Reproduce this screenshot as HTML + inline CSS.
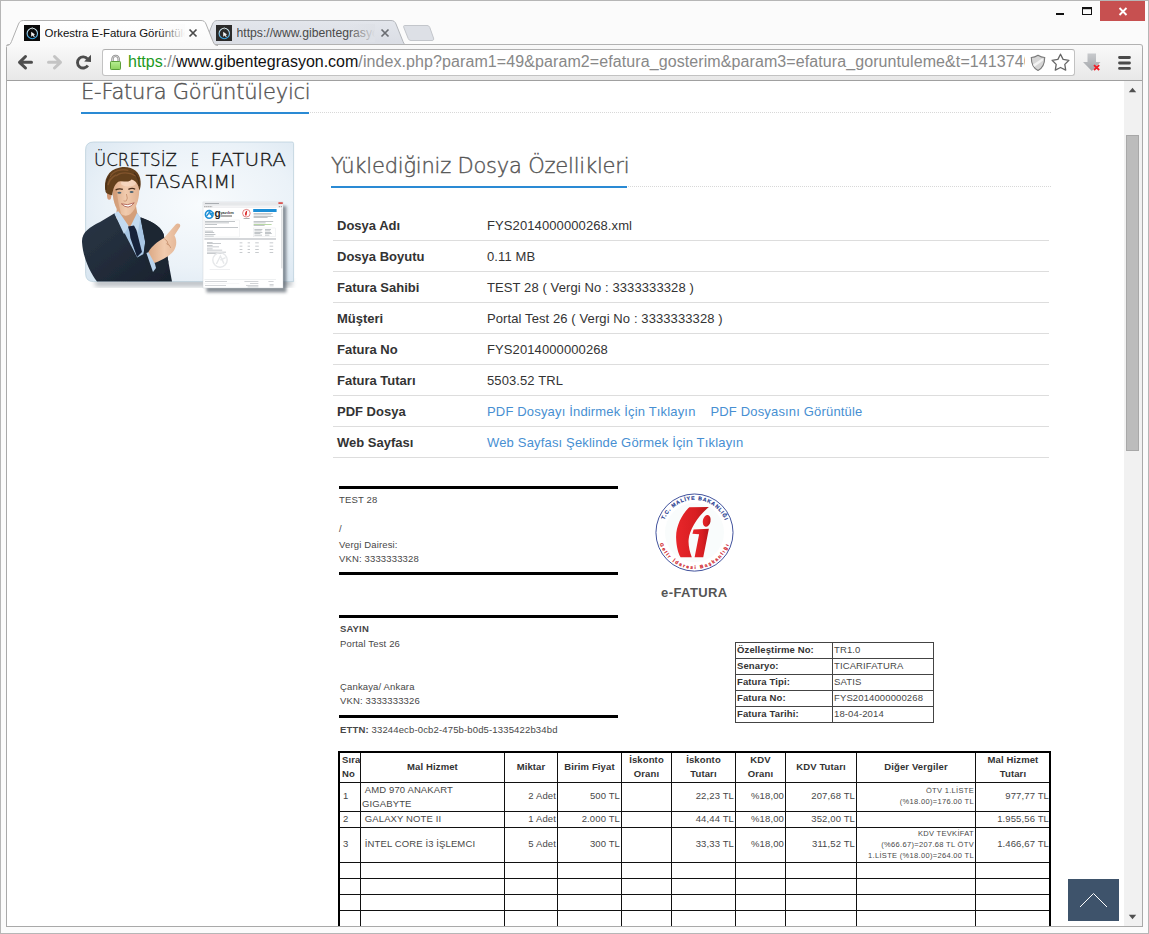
<!DOCTYPE html>
<html lang="tr">
<head>
<meta charset="utf-8">
<title>Orkestra E-Fatura Görüntüleyici</title>
<style>
*{box-sizing:border-box;margin:0;padding:0}
html,body{width:1149px;height:934px;overflow:hidden;background:#fbfbfb;font-family:"Liberation Sans",sans-serif}
.a{position:absolute}
#frame{position:absolute;left:0;top:0;width:1149px;height:934px;border:1px solid #b6b6b6;z-index:50;pointer-events:none}
/* ---------- chrome ---------- */
#toolbar{position:absolute;left:6px;top:44px;width:1137px;height:37px;background:linear-gradient(#f9f9f9,#e8e8e8);border-top:1px solid #b2b2b2;border-bottom:1px solid #a0a0a0;border-left:1px solid #b0b0b0;border-right:1px solid #b0b0b0;border-radius:3px 3px 0 0}
#urlbox{position:absolute;left:102px;top:49px;width:973px;height:27px;background:#fff;border:1px solid #c2c2c2;border-top-color:#b0b0b0;border-radius:3px}
#url{position:absolute;left:128px;top:49px;height:27px;line-height:26px;font-size:16px;white-space:nowrap;color:#888;width:897px;overflow:hidden}
#url .g{color:#1d9a1d}#url .b{color:#111}
.tabtxt{position:absolute;top:24px;font-size:11.8px;line-height:18px;white-space:nowrap;overflow:hidden;color:#111}
/* ---------- page ---------- */
#clip{position:absolute;left:7px;top:81px;width:1117px;height:845px;background:#fff;overflow:hidden}
#pg{position:absolute;left:-7px;top:-81px;width:1149px;height:934px}
#sb{position:absolute;left:1124px;top:81px;width:18px;height:845px;background:#f1f1f1}
#sbthumb{position:absolute;left:1126px;top:135px;width:13px;height:316px;background:#bcbcbc;border:1px solid #a8a8a8}
h1,h2{font-family:"DejaVu Sans Light","DejaVu Sans",sans-serif;font-weight:200;font-size:21px;line-height:28px;letter-spacing:-0.2px;color:#555;-webkit-text-stroke:0.4px #555;position:absolute;white-space:nowrap}
.proptbl{position:absolute;left:333px;top:210px;width:716px;font-size:13px;color:#333}
.proptbl .r{height:31px;border-bottom:1px solid #ddd;position:relative;line-height:31px}
.proptbl .r b{position:absolute;left:4px;top:0;color:#333}
.proptbl .r span{position:absolute;left:154px;top:0;white-space:nowrap;letter-spacing:0.1px}
.proptbl i{font-style:normal;color:#478fd2;letter-spacing:0.17px}
.inv{position:absolute;font-size:9.5px;color:#474747;white-space:nowrap;line-height:12px;letter-spacing:0.15px}
.hl{position:absolute;background:#000;height:3px;left:339px;width:279px}

.it{position:absolute;font-size:9.5px;color:#484848;white-space:nowrap;line-height:11px;letter-spacing:0.12px}
.it.r{text-align:right}
.it.c{text-align:center}
.it.h{font-weight:bold;color:#333}
.vl{position:absolute;width:1px;background:#111;top:753px;height:180px}
.hz{position:absolute;height:1px;background:#111;left:340px;width:709px}
.ib{position:absolute;background:#444}
</style>
</head>
<body>

<!-- TABS -->
<svg class="a" style="left:0;top:0" width="1149" height="47" viewBox="0 0 1149 47">
<defs><linearGradient id="ig2" x1="0" y1="0" x2="0" y2="1"><stop offset="0" stop-color="#e3e6ec"/><stop offset="1" stop-color="#dadde4"/></linearGradient></defs>
<!-- inactive tab -->
<path d="M200.500,45.500 C203.500,45.500 204.500,44 205.500,41.500 L212.500,24 C213.500,21.500 215,20.500 217.500,20.500 L391,20.500 C393.500,20.500 395,21.500 396,24 L403,41.500 C404,44 405,45.500 408,45.500 Z" fill="url(#ig2)" stroke="#b3b6bb" stroke-width="1"/>
<!-- new tab button -->
<path d="M404.500,25.500 L427,25.500 C428.500,25.500 429.300,26.300 429.800,27.500 L433.500,38 C434,39.500 433.500,40.500 432,40.500 L411,40.500 C409.500,40.500 408.700,39.700 408.200,38.500 L404,28 C403.500,26.500 403.500,25.500 404.500,25.500 Z" fill="#dde0e6" stroke="#c3c6cb" stroke-width="1"/>
</svg>
<div id="toolbar"></div>
<svg class="a" style="left:0;top:0" width="1149" height="47" viewBox="0 0 1149 47">
<defs>
<linearGradient id="tg" x1="0" y1="0" x2="0" y2="1"><stop offset="0" stop-color="#ffffff"/><stop offset="1" stop-color="#f9f9f9"/></linearGradient>
<linearGradient id="fr" x1="0" y1="0" x2="0" y2="1"><stop offset="0" stop-color="#e4f1f5"/><stop offset="1" stop-color="#2f9fe0"/></linearGradient><linearGradient id="ig" x1="0" y1="0" x2="0" y2="1"><stop offset="0" stop-color="#e3e6ec"/><stop offset="1" stop-color="#dadde4"/></linearGradient>
</defs>
<!-- active tab -->
<path d="M6.500,45.500 C9.500,45.500 10.500,44 11.500,41.500 L18.500,24 C19.500,21.500 21,20.500 23.500,20.500 L201,20.500 C203.500,20.500 205,21.500 206,24 L213,41.500 C214,44 215,45.500 218,45.500 L218,47 L6.500,47 Z" fill="url(#tg)" stroke="none"/>
<path d="M6.500,45.500 C9.500,45.500 10.500,44 11.500,41.500 L18.500,24 C19.500,21.500 21,20.500 23.500,20.500 L201,20.500 C203.500,20.500 205,21.500 206,24 L213,41.500 C214,44 215,45.500 218,45.500" fill="none" stroke="#b0b0b0" stroke-width="1"/>
<!-- favicons -->
<g id="fav1" transform="translate(24,25)"><rect width="16" height="16" fill="#0b0b0b"/><circle cx="8.300" cy="8.500" r="5.200" fill="none" stroke="url(#fr)" stroke-width="1.100"/><path d="M8.300,2 v2.500" stroke="#7d8a8d" stroke-width="1.200"/><path d="M7.200,6.800 L7.200,11.800 L8.700,10.600 L10,12.300 L10.800,11.600 L9.600,10 L11,9.500 Z" fill="#f5f5f5"/></g>
<g transform="translate(216,25)"><rect width="16" height="16" fill="#2b2b2b"/><circle cx="8.300" cy="8.500" r="5.200" fill="none" stroke="url(#fr)" stroke-width="1.100"/><path d="M8.300,2 v2.500" stroke="#7d8a8d" stroke-width="1.200"/><path d="M7.200,6.800 L7.200,11.800 L8.700,10.600 L10,12.300 L10.800,11.600 L9.600,10 L11,9.500 Z" fill="#f5f5f5"/></g>
<!-- tab close x -->
<path d="M189.500,29.500 l7,7 m0,-7 l-7,7" stroke="#4a4a4a" stroke-width="1.700" fill="none"/>
<path d="M381.500,29.500 l7,7 m0,-7 l-7,7" stroke="#6a6d72" stroke-width="1.700" fill="none"/>
<!-- window controls -->
<rect x="1100" y="1" width="45" height="20" fill="#c75050"/>
<path d="M1119.500,8 l7,7 m0,-7 l-7,7" stroke="#fff" stroke-width="1.900" fill="none"/>
<rect x="1082.500" y="8" width="9" height="6.500" fill="none" stroke="#111" stroke-width="1"/><rect x="1082" y="7" width="10" height="2.200" fill="#111"/>
<rect x="1056" y="13" width="8" height="2" fill="#111"/>
</svg>
<div class="tabtxt" style="left:44.5px;width:140px;font-size:11.45px">Orkestra E-Fatura Görüntüleyici</div>
<div class="a" style="left:158px;top:24px;width:27px;height:18px;background:linear-gradient(90deg,rgba(251,251,251,0),#fbfbfb)"></div>
<div class="tabtxt" style="left:236.5px;width:138px;color:#4a4a4a;font-size:12.2px">https://www.gibentegrasyon.com</div>
<div class="a" style="left:348px;top:24px;width:27px;height:18px;background:linear-gradient(90deg,rgba(222,225,231,0),#dee1e7)"></div>

<!-- TOOLBAR -->
<div id="urlbox"></div>
<div id="url"><span class="g">https</span>://<span class="b">www.gibentegrasyon.com</span><span style="letter-spacing:0.09px">/index.php?param1=49&amp;param2=efatura_gosterim&amp;param3=efatura_goruntuleme&amp;t=14137400</span></div>

<svg class="a" style="left:0;top:46px" width="1149" height="34" viewBox="0 46 1149 34">
<!-- back -->
<path d="M31.500,62.300 H20.500 M25.500,56.500 L19.500,62.300 L25.500,68" fill="none" stroke="#4d4d4d" stroke-width="3" stroke-linecap="round" stroke-linejoin="round"/>
<!-- forward -->
<path d="M48.500,62.300 H59.500 M54.500,56.500 L60.500,62.300 L54.500,68" fill="none" stroke="#c4c4c4" stroke-width="3" stroke-linecap="round" stroke-linejoin="round"/>
<!-- reload -->
<path d="M87.800,65.500 A5.600,5.600 0 1 1 87.500,59" fill="none" stroke="#4d4d4d" stroke-width="2.900"/>
<path d="M91,54.800 V62 L84.200,61.400 Z" fill="#4d4d4d"/>
<!-- lock -->
<defs><linearGradient id="lk" x1="0" y1="0" x2="0" y2="1"><stop offset="0" stop-color="#b6ee92"/><stop offset="1" stop-color="#8ed25e"/></linearGradient></defs><path d="M112.500,61.500 V59 A3.100,3.100 0 0 1 118.700,59 V61.500" fill="none" stroke="#8c8c8c" stroke-width="2.400"/><path d="M112.500,61.500 V59 A3.100,3.100 0 0 1 118.700,59 V61.500" fill="none" stroke="#e6e6e6" stroke-width="0.800"/>
<rect x="110.500" y="61.500" width="10" height="8" rx="0.800" fill="url(#lk)" stroke="#5a9e3a" stroke-width="1"/>
<!-- shield -->
<path d="M1038,55.300 C1035.500,57 1033.500,57.500 1031.300,57.500 C1031.300,63.500 1033,68 1038,70.500 C1043,68 1044.700,63.500 1044.700,57.500 C1042.500,57.500 1040.500,57 1038,55.300 Z" fill="#d6d6d6" stroke="#7a7a7a" stroke-width="1.100"/>
<path d="M1033,64.500 L1042.500,58.300 L1043.200,60.500 L1034.200,67 Z" fill="#f3f3f3"/>
<!-- star -->
<path d="M1060.5,54.2 L1063.1,59.4 L1068.9,60.3 L1064.8,64.4 L1065.7,70.1 L1060.5,67.5 L1055.3,70.1 L1056.2,64.4 L1052.1,60.3 L1057.9,59.4 Z" fill="#fff" stroke="#666" stroke-width="1.300" stroke-linejoin="round"/>
<!-- download -->
<defs><linearGradient id="dg" x1="0" y1="0" x2="0" y2="1"><stop offset="0" stop-color="#c8cacd"/><stop offset="1" stop-color="#a3a6aa"/></linearGradient></defs>
<path d="M1087.500,53.500 H1096 V62 H1100.500 L1091.800,71 L1083,62 H1087.500 Z" fill="url(#dg)"/>
<path d="M1094,65.200 l5.200,4.800 m0,-4.800 l-5.200,4.800" stroke="#ee1c25" stroke-width="1.800" fill="none"/>
<!-- menu -->
<path d="M1119.500,57.500 H1129.500 M1119.500,63 H1129.500 M1119.500,68.400 H1129.500" stroke="#4a4a4a" stroke-width="2.800" stroke-linecap="round"/>
</svg>
<!-- PAGE -->
<div id="clip"><div id="pg">

<h1 style="left:81px;top:78px;">E-Fatura Görüntüleyici</h1>
<div class="a" style="left:81px;top:112px;width:970px;height:0;border-top:1px dotted #d8d8d8"></div>
<div class="a" style="left:81px;top:112px;width:228px;height:2px;background:#2a8ad4"></div>
<h2 style="left:331px;top:152px;">Yüklediğiniz Dosya Özellikleri</h2>
<div class="a" style="left:331px;top:186px;width:720px;height:0;border-top:1px dotted #d8d8d8"></div>
<div class="a" style="left:331px;top:186px;width:296px;height:2px;background:#2a8ad4"></div>
<div class="proptbl">
<div class="r"><b>Dosya Adı</b><span>FYS2014000000268.xml</span></div>
<div class="r"><b>Dosya Boyutu</b><span>0.11 MB</span></div>
<div class="r"><b>Fatura Sahibi</b><span>TEST 28 ( Vergi No : 3333333328 )</span></div>
<div class="r"><b>Müşteri</b><span>Portal Test 26 ( Vergi No : 3333333328 )</span></div>
<div class="r"><b>Fatura No</b><span>FYS2014000000268</span></div>
<div class="r"><b>Fatura Tutarı</b><span>5503.52 TRL</span></div>
<div class="r"><b>PDF Dosya</b><span><i>PDF Dosyayı İndirmek İçin Tıklayın</i> &nbsp;&nbsp; <i>PDF Dosyasını Görüntüle</i></span></div>
<div class="r"><b>Web Sayfası</b><span><i>Web Sayfası Şeklinde Görmek İçin Tıklayın</i></span></div>
</div>

<div class="hl" style="top:486px"></div>
<div class="inv" style="left:339px;top:494px">TEST 28</div>
<div class="inv" style="left:339px;top:523px">/</div>
<div class="inv" style="left:339px;top:539px">Vergi Dairesi:</div>
<div class="inv" style="left:339px;top:553px">VKN: 3333333328</div>
<div class="hl" style="top:572px"></div>
<div class="hl" style="top:615px"></div>
<div class="inv" style="left:340px;top:623px"><b>SAYIN</b></div>
<div class="inv" style="left:340px;top:638px">Portal Test 26</div>
<div class="inv" style="left:340px;top:681px">Çankaya/ Ankara</div>
<div class="inv" style="left:340px;top:695px">VKN: 3333333326</div>
<div class="hl" style="top:715px"></div>
<div class="inv" style="left:340px;top:724px"><b>ETTN:</b> 33244ecb-0cb2-475b-b0d5-1335422b34bd</div>

<svg class="a" style="left:645px;top:485px" width="100" height="100" viewBox="0 0 778 778">
<defs>
<path id="arcT" d="M150.300,270.400 A255,255 0 0 1 623,278.600"/>
<path id="arcB" d="M115.900,457.400 A283,283 0 0 0 655.600,452.700"/>
<linearGradient id="rg" x1="0" y1="0" x2="1" y2="0"><stop offset="0" stop-color="#e8262a"/><stop offset="0.6" stop-color="#d81e22"/><stop offset="1" stop-color="#b8161a"/></linearGradient>
</defs>
<circle cx="385" cy="370" r="300" fill="#fff" stroke="#2c3f92" stroke-width="7"/>
<circle cx="385" cy="370" r="230" fill="#f5fafa" opacity="0.6"/>
<text font-family="'Liberation Sans',sans-serif" font-weight="bold" font-size="40" fill="#2c3f92" stroke="#2c3f92" stroke-width="1.500" textLength="600" lengthAdjust="spacing"><textPath href="#arcT" textLength="600" lengthAdjust="spacing">T.C. MALİYE BAKANLIĞI</textPath></text>
<text font-family="'Liberation Sans',sans-serif" font-weight="bold" font-size="37" fill="#d0222a" stroke="#d0222a" stroke-width="1.500" textLength="700" lengthAdjust="spacing"><textPath href="#arcB" textLength="700" lengthAdjust="spacing">Gelir İdaresi Başkanlığı</textPath></text>
<!-- G crescent -->
<path d="M497,171 L345,173 C285,230 240,320 242,410 C244,480 258,530 277,563 L364,563 C345,510 335,460 340,420 C345,360 400,250 497,171 Z" fill="url(#rg)"/>
<!-- i -->
<ellipse cx="480" cy="279" rx="30" ry="46" transform="rotate(12 480 279)" fill="url(#rg)"/>
<path d="M378,347 L497,341 L453,563 L386,563 L421,384 L369,380 Z" fill="url(#rg)"/>
</svg>

<div class="a" style="left:661px;top:585px;font-size:13px;font-weight:bold;color:#555;letter-spacing:0.42px;line-height:16px;white-space:nowrap">e-FATURA</div>

<div class="ib" style="left:735px;top:642px;width:199px;height:1px"></div>
<div class="ib" style="left:735px;top:658px;width:199px;height:1px"></div>
<div class="ib" style="left:735px;top:674px;width:199px;height:1px"></div>
<div class="ib" style="left:735px;top:690px;width:199px;height:1px"></div>
<div class="ib" style="left:735px;top:706px;width:199px;height:1px"></div>
<div class="ib" style="left:735px;top:722px;width:199px;height:1px"></div>
<div class="ib" style="left:735px;top:642px;width:1px;height:81px"></div>
<div class="ib" style="left:832px;top:642px;width:1px;height:81px"></div>
<div class="ib" style="left:933px;top:642px;width:1px;height:81px"></div>
<div class="it h" style="left:737px;top:644px">Özelleştirme No:</div>
<div class="it h" style="left:737px;top:660px">Senaryo:</div>
<div class="it h" style="left:737px;top:676px">Fatura Tipi:</div>
<div class="it h" style="left:737px;top:692px">Fatura No:</div>
<div class="it h" style="left:737px;top:708px">Fatura Tarihi:</div>
<div class="it" style="left:834px;top:644px">TR1.0</div>
<div class="it" style="left:834px;top:660px">TICARIFATURA</div>
<div class="it" style="left:834px;top:676px">SATIS</div>
<div class="it" style="left:834px;top:692px">FYS2014000000268</div>
<div class="it" style="left:834px;top:708px">18-04-2014</div>

<div class="a" style="left:338px;top:751px;width:713px;height:2px;background:#000"></div>
<div class="a" style="left:338px;top:751px;width:2px;height:182px;background:#000"></div>
<div class="a" style="left:1049px;top:751px;width:2px;height:182px;background:#000"></div>
<div class="vl" style="left:360px"></div>
<div class="vl" style="left:504px"></div>
<div class="vl" style="left:557px"></div>
<div class="vl" style="left:621px"></div>
<div class="vl" style="left:671px"></div>
<div class="vl" style="left:735px"></div>
<div class="vl" style="left:785px"></div>
<div class="vl" style="left:856px"></div>
<div class="vl" style="left:975px"></div>
<div class="hz" style="top:782px"></div>
<div class="hz" style="top:811px"></div>
<div class="hz" style="top:827px"></div>
<div class="hz" style="top:862px"></div>
<div class="hz" style="top:878px"></div>
<div class="hz" style="top:894px"></div>
<div class="hz" style="top:910px"></div>
<div class="hz" style="top:926px"></div>
<div class="it h" style="left:340px;top:753px;line-height:13.5px;width:20px;padding-left:2px">Sıra<br>No</div>
<div class="it h c" style="left:361px;top:761px;width:143px">Mal Hizmet</div>
<div class="it h c" style="left:505px;top:761px;width:52px">Miktar</div>
<div class="it h c" style="left:558px;top:761px;width:63px">Birim Fiyat</div>
<div class="it h c" style="left:622px;top:753px;line-height:13.5px;width:49px">İskonto<br>Oranı</div>
<div class="it h c" style="left:672px;top:753px;line-height:13.5px;width:63px">İskonto<br>Tutarı</div>
<div class="it h c" style="left:736px;top:753px;line-height:13.5px;width:49px">KDV<br>Oranı</div>
<div class="it h c" style="left:786px;top:761px;width:70px">KDV Tutarı</div>
<div class="it h c" style="left:857px;top:761px;width:118px">Diğer Vergiler</div>
<div class="it h c" style="left:976px;top:753px;line-height:13.5px;width:74px">Mal Hizmet<br>Tutarı</div>
<div class="it " style="left:340px;top:790px;width:20px;padding-left:3px">1</div>
<div class="it" style="left:361px;top:783px;padding-left:1px;line-height:13.5px">&nbsp;AMD 970 ANAKART<br>GIGABYTE</div>
<div class="it r" style="left:505px;top:790px;width:52px;padding-right:1px">2 Adet</div>
<div class="it r" style="left:558px;top:790px;width:63px;padding-right:1px">500 TL</div>
<div class="it r" style="left:672px;top:790px;width:63px;padding-right:1px">22,23 TL</div>
<div class="it r" style="left:736px;top:790px;width:49px;padding-right:1px">%18,00</div>
<div class="it r" style="left:786px;top:790px;width:70px;padding-right:1px">207,68 TL</div>
<div class="it r" style="left:857px;top:785.0px;width:118px;padding-right:1px;font-size:7.5px;line-height:11px;letter-spacing:0.32px">ÖTV 1.LİSTE<br>(%18.00)=176.00 TL</div>
<div class="it r" style="left:976px;top:790px;width:74px;padding-right:1px">977,77 TL</div>
<div class="it " style="left:340px;top:813px;width:20px;padding-left:3px">2</div>
<div class="it " style="left:361px;top:813px;width:143px;padding-left:1px">&nbsp;GALAXY NOTE II</div>
<div class="it r" style="left:505px;top:813px;width:52px;padding-right:1px">1 Adet</div>
<div class="it r" style="left:558px;top:813px;width:63px;padding-right:1px">2.000 TL</div>
<div class="it r" style="left:672px;top:813px;width:63px;padding-right:1px">44,44 TL</div>
<div class="it r" style="left:736px;top:813px;width:49px;padding-right:1px">%18,00</div>
<div class="it r" style="left:786px;top:813px;width:70px;padding-right:1px">352,00 TL</div>
<div class="it r" style="left:976px;top:813px;width:74px;padding-right:1px">1.955,56 TL</div>
<div class="it " style="left:340px;top:838px;width:20px;padding-left:3px">3</div>
<div class="it " style="left:361px;top:838px;width:143px;padding-left:1px">&nbsp;İNTEL CORE İ3 İŞLEMCI</div>
<div class="it r" style="left:505px;top:838px;width:52px;padding-right:1px">5 Adet</div>
<div class="it r" style="left:558px;top:838px;width:63px;padding-right:1px">300 TL</div>
<div class="it r" style="left:672px;top:838px;width:63px;padding-right:1px">33,33 TL</div>
<div class="it r" style="left:736px;top:838px;width:49px;padding-right:1px">%18,00</div>
<div class="it r" style="left:786px;top:838px;width:70px;padding-right:1px">311,52 TL</div>
<div class="it r" style="left:857px;top:827.5px;width:118px;padding-right:1px;font-size:7.5px;line-height:11px;letter-spacing:0.32px">KDV TEVKİFAT<br>(%66.67)=207.68 TL ÖTV<br>1.LİSTE (%18.00)=264.00 TL</div>
<div class="it r" style="left:976px;top:838px;width:74px;padding-right:1px">1.466,67 TL</div>



<div class="a" style="left:1068px;top:879px;width:51px;height:42px;background:#3e536b"></div>
<svg class="a" style="left:1068px;top:879px" width="51" height="42" viewBox="0 0 51 42"><path d="M12,28 L25.500,14.500 L39,28" fill="none" stroke="#fff" stroke-width="1"/></svg>

<svg class="a" style="left:76px;top:134px" width="230" height="170" viewBox="0 0 1150 850">
<defs>
<radialGradient id="bbg" cx="0.55" cy="0.45" r="0.75"><stop offset="0" stop-color="#f8fbfd"/><stop offset="0.6" stop-color="#ebf2f8"/><stop offset="1" stop-color="#d9e6f1"/></radialGradient>
<linearGradient id="skin" x1="0" y1="0" x2="1" y2="0"><stop offset="0" stop-color="#dca985"/><stop offset="0.5" stop-color="#f1cbae"/><stop offset="1" stop-color="#e2b392"/></linearGradient>
<linearGradient id="suit" x1="0" y1="0" x2="1" y2="1"><stop offset="0" stop-color="#2b3747"/><stop offset="1" stop-color="#18212d"/></linearGradient>
<filter id="bl" x="-20%" y="-20%" width="140%" height="140%"><feGaussianBlur stdDeviation="14"/></filter>
<filter id="bl2" x="-20%" y="-20%" width="140%" height="140%"><feGaussianBlur stdDeviation="9"/></filter>
<filter id="soft" x="-5%" y="-5%" width="110%" height="110%"><feGaussianBlur stdDeviation="2.2"/></filter>
</defs>
<!-- card shadow -->
<path d="M95,730 H1080 V762 H95 Z" fill="#6f7a84" opacity="0.5" filter="url(#bl)"/>
<!-- card -->
<path d="M88,40 H1080 Q1088,40 1088,48 V738 H88 Q48,738 48,698 V80 Q48,40 88,40 Z" fill="url(#bbg)" stroke="#b4cbd9" stroke-width="3.500"/>
<!-- headline -->
<text y="162" font-family="'DejaVu Sans Light','DejaVu Sans',sans-serif" font-weight="200" font-size="92" fill="#111" lengthAdjust="spacingAndGlyphs" stroke="#111" stroke-width="1.500"><tspan x="90" textLength="415" lengthAdjust="spacingAndGlyphs">ÜCRETSİZ</tspan> <tspan x="574" textLength="42" lengthAdjust="spacingAndGlyphs">E</tspan> <tspan x="672" textLength="378" lengthAdjust="spacingAndGlyphs">FATURA</tspan></text>
<text x="347" y="270" font-family="'DejaVu Sans Light','DejaVu Sans',sans-serif" font-weight="200" font-size="92" fill="#111" lengthAdjust="spacingAndGlyphs" stroke="#111" stroke-width="1.500" textLength="452">TASARIMI</text>
<!-- man -->
<g filter="url(#soft)">
<!-- suit -->
<path d="M30,540 C28,490 70,465 120,440 L195,395 L300,600 L320,415 C370,435 420,455 438,500 L462,640 L480,738 L105,738 C70,690 35,620 30,540 Z" fill="url(#suit)"/>
<!-- shirt V -->
<path d="M192,398 L250,378 L300,385 L322,418 L346,540 L338,600 L306,618 Z" fill="#a8c6e4"/>
<path d="M322,418 L346,540 L338,600 L360,690 L440,700 L462,640 L438,500 C420,455 370,435 322,418 Z" fill="#1d2733"/>
<!-- neck -->
<path d="M205,360 L300,360 L312,430 L262,470 L200,420 Z" fill="#d49f7a"/>
<!-- collar -->
<path d="M192,398 L212,385 L265,462 L240,500 Z" fill="#c3daf0"/>
<path d="M322,418 L305,395 L272,462 L310,490 Z" fill="#c3daf0"/>
<!-- tie -->
<path d="M260,462 L290,458 L302,480 L330,590 L305,615 L272,520 L268,490 Z" fill="#18223a"/>
<!-- face -->
<path d="M182,285 C178,240 205,213 250,213 C295,213 319,245 316,290 C314,332 300,376 272,400 C256,411 240,411 226,400 C200,380 186,340 182,285 Z" fill="url(#skin)"/>
<path d="M182,285 C186,340 200,380 226,400 C215,360 205,320 205,270 Z" fill="#c98f6a" opacity="0.55"/>
<ellipse cx="262" cy="245" rx="38" ry="18" fill="#f8dcc6" opacity="0.7"/>
<!-- ear -->
<ellipse cx="166" cy="306" rx="11" ry="23" fill="#d39a78"/>
<!-- hair -->
<path d="M148,290 C136,230 158,178 220,167 C277,158 320,185 323,236 C325,258 321,272 317,284 C313,256 302,234 277,228 C262,250 225,226 207,242 C190,256 184,282 181,306 C166,303 152,300 148,290 Z" fill="#63401f"/>
<path d="M170,215 C185,185 225,172 262,182 M200,210 C225,188 265,190 300,210 M160,255 C165,235 180,215 200,205" stroke="#8a5a30" stroke-width="7" fill="none" opacity="0.8"/>
<path d="M150,280 C148,250 155,225 170,205 M290,195 C308,210 316,235 316,260" stroke="#3d2612" stroke-width="6" fill="none" opacity="0.7"/>
<!-- eyes / brows / mouth -->
<path d="M198,280 q18,-10 36,-3" stroke="#4a2e1c" stroke-width="6" fill="none"/><path d="M262,277 q18,-9 34,-1" stroke="#4a2e1c" stroke-width="6" fill="none"/>
<ellipse cx="217" cy="294" rx="10" ry="5" fill="#4b6270"/><ellipse cx="278" cy="290" rx="10" ry="5" fill="#4b6270"/>
<path d="M227,349 Q258,360 291,344 Q262,384 227,349 Z" fill="#fff" stroke="#a8574a" stroke-width="4"/>
<path d="M252,300 q9,24 0,34 q-8,4 -14,0" stroke="#c48e6c" stroke-width="4" fill="none"/>
<!-- cuff -->
<path d="M352,595 L378,585 L400,670 L385,690 Z" fill="#b9d3ec"/>
<!-- hand -->
<path d="M362,590 C380,560 405,540 440,520 L498,452 C508,442 526,448 520,464 L492,508 C505,530 505,560 488,585 C465,615 420,635 392,645 Z" fill="url(#skin)"/>
<path d="M440,522 q20,10 22,34 M452,548 q18,4 22,22" stroke="#c48e6c" stroke-width="4" fill="none"/>
</g>
<!-- document -->
<rect x="652" y="360" width="400" height="432" fill="#4c5660" opacity="0.65" filter="url(#bl2)"/>
<rect x="635" y="340" width="400" height="430" fill="#fff" stroke="#c9ced3" stroke-width="2"/>
<rect x="636" y="341" width="398" height="18" fill="#e6e8ea"/>
<rect x="636" y="359" width="398" height="10" fill="#f1f2f3"/>
<rect x="1012" y="341" width="22" height="9" fill="#d9534f"/><g fill="#777"><rect x="642" y="361" width="5" height="5"/><rect x="652" y="361" width="5" height="5"/><rect x="662" y="361" width="5" height="5"/><rect x="672" y="361" width="5" height="5"/><rect x="1014" y="361" width="5" height="5"/><rect x="1024" y="361" width="5" height="5"/></g><rect x="684" y="361" width="320" height="6" fill="#fff" stroke="#d0d3d6" stroke-width="1"/><rect x="645" y="345" width="70" height="4" fill="#9a9ea3"/>
<rect x="1026" y="372" width="6" height="300" fill="#d8dadd"/>
<circle cx="666" cy="402" r="19" fill="#fff" stroke="#1d8fd6" stroke-width="8"/><path d="M652,412 L668,390 L682,414 M668,402 L690,394" stroke="#1d8fd6" stroke-width="7" fill="none"/><path d="M678,380 L700,392" stroke="#fff" stroke-width="5"/>
<text x="692" y="415" font-family="'Liberation Sans',sans-serif" font-weight="bold" font-size="50" fill="#222">g</text>
<text x="722" y="402" font-family="'Liberation Sans',sans-serif" font-weight="bold" font-size="20" fill="#333">yazılım</text>
<rect x="722" y="407" width="58" height="6" fill="#777"/>
<circle cx="852" cy="396" r="19" fill="#fff" stroke="#c33" stroke-width="3"/><path d="M846,408 q-4,-20 10,-26 l-3,26 z" fill="#d22"/>
<rect x="838" y="420" width="30" height="4" fill="#999"/>
<rect x="886" y="375" width="117" height="15" fill="#1d8fd6"/>
<g fill="#9aa0a6">
<rect x="888" y="396" width="95" height="3"/><rect x="888" y="403" width="88" height="3"/><rect x="888" y="410" width="98" height="3"/><rect x="888" y="417" width="70" height="3"/>
<rect x="888" y="436" width="98" height="3"/><rect x="888" y="443" width="60" height="3"/><rect x="888" y="450" width="90" height="3" fill="#8bbf6a"/><rect x="888" y="457" width="55" height="3"/>
<rect x="892" y="476" width="40" height="3"/><rect x="945" y="476" width="30" height="3"/><rect x="892" y="483" width="36" height="3"/><rect x="945" y="483" width="26" height="3"/><rect x="892" y="490" width="40" height="3"/><rect x="945" y="490" width="30" height="3"/><rect x="892" y="497" width="30" height="3"/><rect x="945" y="497" width="34" height="3"/><rect x="892" y="504" width="38" height="3"/><rect x="945" y="504" width="22" height="3"/>
<rect x="645" y="436" width="150" height="3"/><rect x="645" y="443" width="120" height="3"/><rect x="645" y="450" width="60" height="3"/>
<rect x="645" y="466" width="165" height="3"/>
<rect x="645" y="484" width="40" height="3"/><rect x="645" y="491" width="46" height="3"/><rect x="645" y="502" width="52" height="3"/><rect x="645" y="509" width="44" height="3"/>
</g>
<rect x="642" y="430" width="175" height="85" fill="none" stroke="#e1e3e6" stroke-width="2"/>
<rect x="886" y="470" width="110" height="44" fill="none" stroke="#e1e3e6" stroke-width="2"/>
<rect x="642" y="522" width="358" height="6" fill="#b9bdc2"/>
<g fill="#a4a9ae">
<rect x="655" y="541" width="28" height="3"/><rect x="655" y="547" width="70" height="3"/><rect x="818" y="543" width="14" height="3"/><rect x="858" y="543" width="12" height="3"/><rect x="896" y="543" width="18" height="3"/><rect x="968" y="543" width="18" height="3"/>
<rect x="655" y="557" width="28" height="3"/><rect x="655" y="563" width="60" height="3"/><rect x="818" y="559" width="14" height="3"/><rect x="858" y="559" width="12" height="3"/><rect x="896" y="559" width="18" height="3"/><rect x="968" y="559" width="18" height="3"/>
<rect x="655" y="573" width="28" height="3"/><rect x="655" y="579" width="76" height="3"/><rect x="818" y="575" width="14" height="3"/><rect x="858" y="575" width="12" height="3"/><rect x="896" y="575" width="18" height="3"/><rect x="968" y="575" width="18" height="3"/>
<rect x="655" y="589" width="95" height="3"/><rect x="655" y="595" width="80" height="3"/><rect x="818" y="591" width="14" height="3"/><rect x="858" y="591" width="12" height="3"/><rect x="896" y="591" width="18" height="3"/><rect x="968" y="591" width="18" height="3"/>
</g>
<circle cx="720" cy="630" r="36" fill="none" stroke="#e6e8ea" stroke-width="7"/><path d="M702,650 L722,610 L740,648 M722,630 L748,618" stroke="#e6e8ea" stroke-width="7" fill="none"/>
<rect x="668" y="676" width="102" height="3" fill="#e3e5e8"/>
<rect x="642" y="728" width="358" height="2" fill="#d5d8db"/>
<g fill="#b4b8bd"><rect x="645" y="736" width="110" height="3"/><rect x="645" y="757" width="105" height="3"/><rect x="842" y="736" width="70" height="3"/><rect x="962" y="736" width="26" height="3"/><rect x="870" y="746" width="42" height="3"/><rect x="968" y="750" width="20" height="3"/><rect x="850" y="755" width="62" height="3"/><rect x="968" y="758" width="20" height="3"/><rect x="858" y="763" width="54" height="3"/></g>
<rect x="642" y="745" width="175" height="1.500" fill="#dfe1e4"/>
</svg>
<!-- CONTENT -->
</div></div>
<div id="sb"></div>
<div id="sbthumb"></div>

<svg class="a" style="left:1124px;top:81px" width="18" height="845" viewBox="0 0 18 845"><path d="M4.800,11.200 L8.500,6.800 L12.200,11.200 Z" fill="#505050"/><path d="M4.800,833.800 L8.500,838.200 L12.200,833.800 Z" fill="#505050"/></svg>
<div class="a" style="left:6px;top:48px;width:1px;height:879px;background:#a9a9a9"></div>
<div class="a" style="left:1142px;top:48px;width:1px;height:879px;background:#a9a9a9"></div>
<div class="a" style="left:6px;top:926px;width:1137px;height:1px;background:#a9a9a9"></div>
<div id="frame"></div>
</body>
</html>
